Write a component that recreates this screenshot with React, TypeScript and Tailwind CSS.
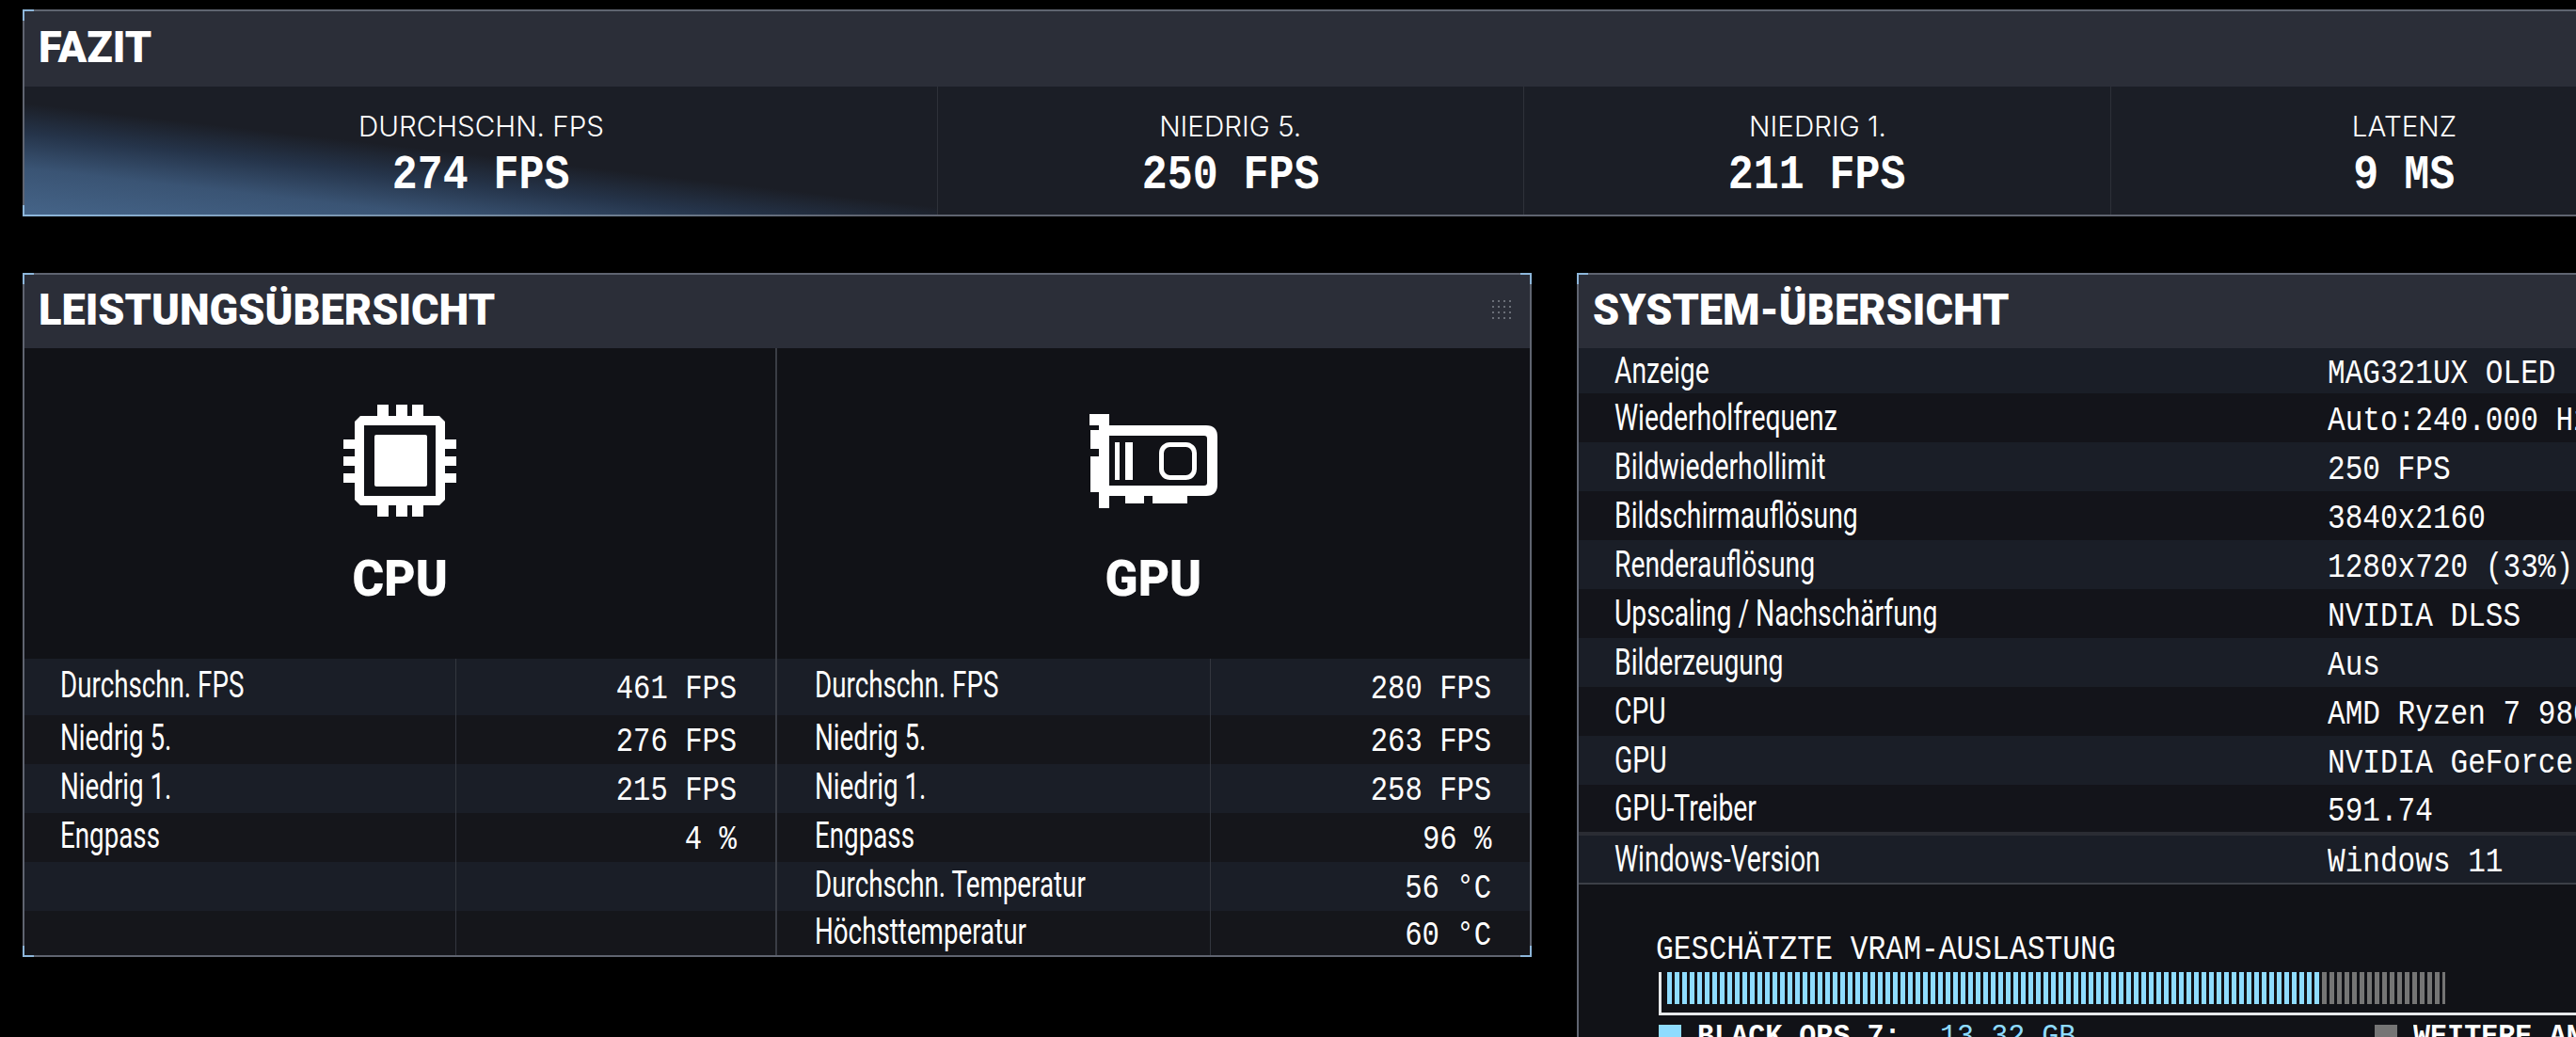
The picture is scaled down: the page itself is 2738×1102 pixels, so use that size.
const fazit = [
  { label: "DURCHSCHN. FPS", value: "274 FPS" },
  { label: "NIEDRIG 5.", value: "250 FPS" },
  { label: "NIEDRIG 1.", value: "211 FPS" },
  { label: "LATENZ", value: "9 MS" },
];

const cpuRows = [
  ["Durchschn. FPS", "461 FPS"],
  ["Niedrig 5.", "276 FPS"],
  ["Niedrig 1.", "215 FPS"],
  ["Engpass", "4 %"],
  ["", ""],
  ["", ""],
];

const gpuRows = [
  ["Durchschn. FPS", "280 FPS"],
  ["Niedrig 5.", "263 FPS"],
  ["Niedrig 1.", "258 FPS"],
  ["Engpass", "96 %"],
  ["Durchschn. Temperatur", "56 °C"],
  ["Höchsttemperatur", "60 °C"],
];

const systemRows = [
  ["Anzeige", "MAG321UX OLED"],
  ["Wiederholfrequenz", "Auto:240.000 Hz"],
  ["Bildwiederhollimit", "250 FPS"],
  ["Bildschirmauflösung", "3840x2160"],
  ["Renderauflösung", "1280x720 (33%)"],
  ["Upscaling / Nachschärfung", "NVIDIA DLSS"],
  ["Bilderzeugung", "Aus"],
  ["CPU", "AMD Ryzen 7 9800X3D"],
  ["GPU", "NVIDIA GeForce RTX 5080"],
  ["GPU-Treiber", "591.74"],
];

const Corners = ({ right = true, bottom = true }: { right?: boolean; bottom?: boolean }) => (
  <>
    <div className="absolute -left-[2px] -top-[2px] h-[12px] w-[12px] border-l-2 border-t-2 border-[#8db6da]" />
    {right && (
      <div className="absolute -right-[2px] -top-[2px] h-[12px] w-[12px] border-r-2 border-t-2 border-[#8db6da]" />
    )}
    {bottom && (
      <div className="absolute -bottom-[2px] -left-[2px] h-[12px] w-[12px] border-b-2 border-l-2 border-[#8db6da]" />
    )}
    {bottom && right && (
      <div className="absolute -bottom-[2px] -right-[2px] h-[12px] w-[12px] border-b-2 border-r-2 border-[#8db6da]" />
    )}
  </>
);

const PanelTitle = ({ children }: { children: string }) => (
  <h2 className="origin-left scale-x-[0.98] whitespace-nowrap font-['Roboto',sans-serif] text-[46px] font-black leading-none text-white">
    {children}
  </h2>
);

const CpuIcon = () => (
  <svg width="120" height="119" viewBox="0 0 120 119" fill="#fff">
    <path
      fillRule="evenodd"
      d="M18 12H102L108 18V101L102 107H18L12 101V18ZM22 22V97H98V22Z"
    />
    <rect x="33" y="32" width="56" height="55" rx="2" />
    <rect x="0" y="37" width="12" height="10" />
    <rect x="0" y="55" width="12" height="10" />
    <rect x="0" y="73" width="12" height="10" />
    <rect x="108" y="37" width="12" height="10" />
    <rect x="108" y="55" width="12" height="10" />
    <rect x="108" y="73" width="12" height="10" />
    <rect x="36" y="0" width="12" height="12" />
    <rect x="56" y="0" width="12" height="12" />
    <rect x="73" y="0" width="12" height="12" />
    <rect x="36" y="107" width="12" height="12" />
    <rect x="56" y="107" width="12" height="12" />
    <rect x="73" y="107" width="12" height="12" />
  </svg>
);

const GpuIcon = () => (
  <svg width="136" height="100" viewBox="0 0 136 100" fill="#fff">
    <path d="M0 0H21V100H10V83H1V45H10V37H1V17H10V12H0Z" />
    <path
      fillRule="evenodd"
      d="M21 12H124Q136 12 136 24V75Q136 87 124 87H21ZM21 23V76H122Q125 76 125 73V26Q125 23 122 23Z"
    />
    <rect x="27" y="30" width="5" height="40" />
    <rect x="38" y="30" width="8" height="40" />
    <rect x="76.5" y="32.5" width="35" height="35" rx="9" fill="none" stroke="#fff" strokeWidth="5" />
    <rect x="38" y="87" width="20" height="8" />
    <rect x="67" y="87" width="37" height="8" />
  </svg>
);

const ChipColumn = ({
  name,
  icon,
  rows,
  split,
}: {
  name: string;
  icon: React.ReactNode;
  rows: string[][];
  split: string;
}) => (
  <div className="flex flex-col">
    <div className="flex h-[330px] flex-col items-center pt-[60px]">
      <div className="flex h-[119px] items-center justify-center">{icon}</div>
      <div className="mt-[41px] origin-center scale-x-[0.97] font-['Roboto',sans-serif] text-[53px] font-black leading-[50px] text-white">
        {name}
      </div>
    </div>
    <div>
      {rows.map(([label, value], i) => (
        <div
          key={i}
          className="flex h-[52px] items-center odd:bg-[#1a1e27] even:bg-[#15161b] first:h-[60px] last:h-[47px]"
        >
          <div className={`flex h-full items-center border-r border-[#33363e] pb-[4px] ${split}`}>
            <span className="inline-block origin-left scale-x-[0.73] whitespace-nowrap font-['Roboto',sans-serif] text-[38px] leading-none text-white">
              {label}
            </span>
          </div>
          <div className="flex h-full flex-1 items-center justify-end pr-[41px] pt-[6px]">
            <span className="inline-block origin-right scale-x-[0.85] whitespace-pre font-['Liberation_Mono',monospace] text-[36px] leading-none text-white">
              {value}
            </span>
          </div>
        </div>
      ))}
    </div>
  </div>
);

const SystemRow = ({ label, value, className }: { label: string; value: string; className: string }) => (
  <div className={`flex items-center ${className}`}>
    <div className="w-[796px] shrink-0 pl-[38px]">
      <span className="inline-block origin-left scale-x-[0.745] whitespace-nowrap font-['Roboto',sans-serif] text-[38px] leading-none text-white">
        {label}
      </span>
    </div>
    <span className="inline-block origin-left scale-x-[0.84] whitespace-pre pt-[6px] font-['Liberation_Mono',monospace] text-[37px] leading-none text-white">
      {value}
    </span>
  </div>
);

const App = () => {
  return (
    <div className="h-[1102px] w-[2738px] overflow-hidden bg-black pl-[24px] pt-[10px]">
      {/* Fazit */}
      <section className="relative h-[220px] w-[2900px] border-2 border-[#5f6470] bg-[#1b1e26]">
        <Corners right={false} />
        <div className="absolute -bottom-[2px] left-0 h-[2px] w-[900px] bg-gradient-to-r from-[#8db6da] to-transparent" />
        <div className="flex h-[80px] items-center bg-[#2b2e38] pb-[4px] pl-[15px]">
          <PanelTitle>FAZIT</PanelTitle>
        </div>
        <div className="grid h-[136px] grid-cols-[970px_623px_624px_624px]">
          {fazit.map((item, i) => (
            <div
              key={item.label}
              className={`flex flex-col items-center justify-center pt-[8px] ${
                i > 0
                  ? "border-l border-[#2e3139]"
                  : "bg-[linear-gradient(186.5deg,transparent_52%,#25344a_65%,#3a5474_80%,#456488_100%)]"
              }`}
            >
              <span className="origin-center scale-x-[0.985] whitespace-nowrap font-['Inter',sans-serif] text-[30px] font-light leading-[40px] text-white">
                {item.label}
              </span>
              <span className="mt-[6px] origin-center scale-x-[0.88] whitespace-pre font-['Liberation_Mono',monospace] text-[51px] font-bold leading-[54px] text-white">
                {item.value}
              </span>
            </div>
          ))}
        </div>
      </section>

      <div className="mt-[60px] flex gap-[48px]">
        {/* Leistungsübersicht */}
        <section className="relative h-[727px] w-[1604px] shrink-0 border-2 border-[#5f6470] bg-[#111217]">
          <Corners />
          <div className="flex h-[78px] items-center justify-between bg-[#2b2e38] pb-[4px] pl-[15px] pr-[20px]">
            <PanelTitle>LEISTUNGSÜBERSICHT</PanelTitle>
            <div className="grid grid-cols-4 gap-[4px]">
              {Array.from({ length: 16 }).map((_, i) => (
                <div key={i} className="h-[2px] w-[2px] bg-[#6a6e77]" />
              ))}
            </div>
          </div>
          <div className="grid grid-cols-[800px_1fr]">
            <div className="border-r-2 border-[#3a3d45]">
              <ChipColumn name="CPU" icon={<CpuIcon />} rows={cpuRows} split="w-[459px] pl-[38px]" />
            </div>
            <ChipColumn name="GPU" icon={<GpuIcon />} rows={gpuRows} split="w-[461px] pl-[40px]" />
          </div>
        </section>

        {/* System-Übersicht */}
        <section className="relative h-[900px] w-[1200px] shrink-0 border-l-2 border-t-2 border-[#5f6470] bg-[#111217]">
          <Corners right={false} bottom={false} />
          <div className="flex h-[78px] items-center bg-[#2b2e38] pb-[4px] pl-[15px]">
            <PanelTitle>SYSTEM-ÜBERSICHT</PanelTitle>
          </div>
          {systemRows.map(([label, value], i) => (
            <SystemRow
              key={label}
              label={label}
              value={value}
              className={`${i === 0 ? "h-[48px]" : i === 9 ? "h-[50px]" : "h-[52px]"} ${
                i % 2 === 0 ? "bg-[#1a1e27]" : "bg-[#13141a]"
              }`}
            />
          ))}
          <SystemRow
            label="Windows-Version"
            value="Windows 11"
            className="h-[56px] border-b-2 border-t-4 border-b-[#3c3f47] border-t-[#2a2c33] bg-[#1a1e27]"
          />

          <div className="pl-[85px] pt-[52px]">
            <div className="-ml-[3px] origin-left scale-x-[0.87] whitespace-pre font-['Liberation_Mono',monospace] text-[36px] leading-[36px] text-white">
              GESCHÄTZTE VRAM-AUSLASTUNG
            </div>
            <div className="mt-[5px] h-[46px] border-b-[3px] border-l-[3px] border-[#e6e8ea] pl-[6px]">
              <div className="flex h-[34px]">
                <div className="w-[696px] bg-[repeating-linear-gradient(90deg,#8fdcff_0,#8fdcff_5px,transparent_5px,transparent_8px)]" />
                <div className="w-[131px] bg-[repeating-linear-gradient(90deg,#757575_0,#757575_5px,transparent_5px,transparent_8px)]" />
              </div>
            </div>
            <div className="mt-[10px] flex font-['Liberation_Mono',monospace] text-[32px] font-bold leading-[26px] text-white">
              <div className="flex w-[761px] shrink-0 items-start">
                <div className="h-[24px] w-[24px] bg-[#8fdcff]" />
                <span className="ml-[17px] origin-left scale-x-[0.94] whitespace-pre">BLACK OPS 7:</span>
                <span className="ml-[28px] origin-left scale-x-[0.94] whitespace-pre font-normal text-[#8fdcff]">
                  13.32 GB
                </span>
              </div>
              <div className="flex shrink-0 items-start">
                <div className="h-[24px] w-[24px] bg-[#757575]" />
                <span className="ml-[17px] origin-left scale-x-[0.94] whitespace-pre">WEITERE ANWENDUNGEN:</span>
              </div>
            </div>
          </div>
        </section>
      </div>
    </div>
  );
};

export default App;
